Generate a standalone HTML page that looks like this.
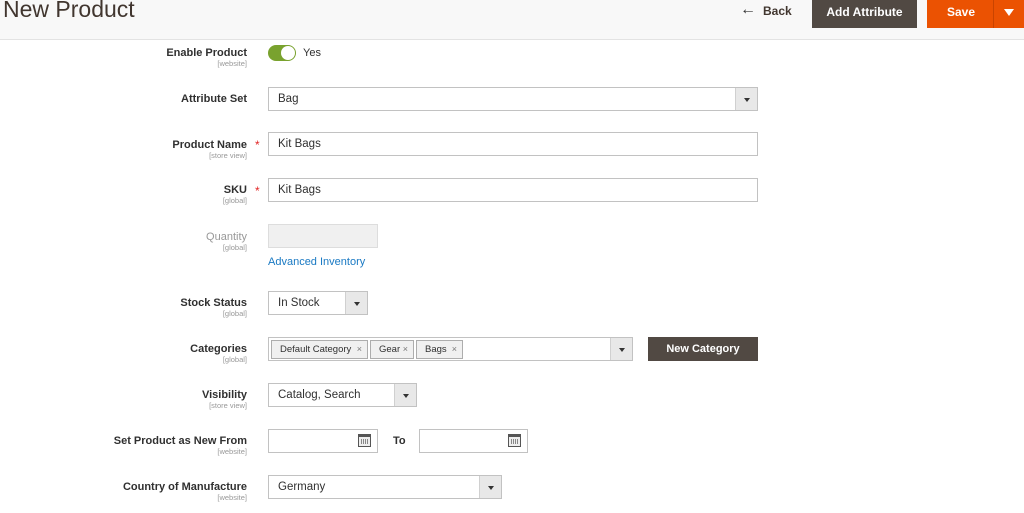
<!DOCTYPE html>
<html><head><style>
*{box-sizing:border-box;margin:0;padding:0}
body{width:1024px;height:513px;background:#fff;font-family:"Liberation Sans",sans-serif;position:relative;overflow:hidden;color:#303030}
.a{position:absolute}
.hdr{left:0;top:0;width:1024px;height:40px;background:#f8f8f8;border-bottom:1px solid #e3e3e3}
.lbl{position:absolute;right:777px;text-align:right;font-size:11px;font-weight:bold;color:#303030;white-space:nowrap}
.lbl small{display:block;font-size:7.5px;font-weight:normal;color:#999;margin-top:0px}
.box{position:absolute;border:1px solid #c2c2c2;background:#fff;height:24px;font-size:11.5px;line-height:22px;padding-left:9px;color:#303030}
.arr{position:absolute;top:0;right:0;width:22px;height:22px;background:#e8e8e8;border-left:1px solid #d0d0d0}
.arr:after{content:"";position:absolute;left:8px;top:10px;border-left:3px solid transparent;border-right:3px solid transparent;border-top:4px solid #333}
.star{position:absolute;left:255px;color:#e22626;font-size:12px}
.tag{position:absolute;top:2px;height:19px;border:1px solid #adadad;background:#f0f0f0;font-size:9.5px;line-height:17px;padding-left:8px;color:#303030}
.tag i{font-style:normal;color:#777;font-size:9px;position:absolute;right:5px}
.cal{position:absolute;right:6px;top:4px;width:13px;height:13px;border:1px solid #555;background:#eee;border-top:3px solid #555}
.cal:after{content:"";position:absolute;left:2px;top:2px;width:7px;height:5px;background:repeating-linear-gradient(90deg,#888 0 1px,transparent 1px 2px)}
</style></head><body>
<div class="a hdr"></div>
<div class="a" style="left:3px;top:-4px;font-size:23px;color:#41362f">New Product</div>
<div class="a" style="left:740px;top:1px;font-size:16px;color:#333">&#8592;</div>
<div class="a" style="left:763px;top:4px;font-size:12px;font-weight:bold;color:#41362f">Back</div>
<div class="a" style="left:812px;top:0;width:105px;height:28px;background:#514943;color:#fff;font-size:12px;font-weight:bold;text-align:center;line-height:24px">Add Attribute</div>
<div class="a" style="left:927px;top:0;width:97px;height:28px;background:#eb5202;color:#fff;font-size:12px;font-weight:bold;line-height:24px"><span style="position:absolute;left:20px">Save</span><span style="position:absolute;left:66px;top:0;width:1px;height:28px;background:#c94400"></span><span style="position:absolute;left:77px;top:9px;border-left:5px solid transparent;border-right:5px solid transparent;border-top:7px solid #fff"></span></div>

<div class="lbl" style="top:47px">Enable Product<small>[website]</small></div>
<div class="a" style="left:268px;top:45px;width:28px;height:16px;border-radius:8px;background:#79a22e"><div class="a" style="right:1px;top:1px;width:14px;height:14px;border-radius:7px;background:#fff"></div></div>
<div class="a" style="left:303px;top:47px;font-size:11px">Yes</div>

<div class="lbl" style="top:93px">Attribute Set</div>
<div class="box" style="left:268px;top:87px;width:490px">Bag<div class="arr"></div></div>

<div class="lbl" style="top:139px">Product Name<small>[store view]</small></div><span class="star" style="top:138px">*</span>
<div class="box" style="left:268px;top:132px;width:490px">Kit Bags</div>

<div class="lbl" style="top:184px">SKU<small>[global]</small></div><span class="star" style="top:184px">*</span>
<div class="box" style="left:268px;top:178px;width:490px">Kit Bags</div>

<div class="lbl" style="top:231px;color:#999;font-weight:normal">Quantity<small>[global]</small></div>
<div class="box" style="left:268px;top:224px;width:110px;background:#f0f0f0;border-color:#ddd"></div>
<div class="a" style="left:268px;top:256px;font-size:11px;color:#1979c3">Advanced Inventory</div>

<div class="lbl" style="top:297px">Stock Status<small>[global]</small></div>
<div class="box" style="left:268px;top:291px;width:100px">In Stock<div class="arr"></div></div>

<div class="lbl" style="top:343px">Categories<small>[global]</small></div>
<div class="box" style="left:268px;top:337px;width:365px">
<div class="tag" style="left:2px;width:97px">Default Category<i>×</i></div>
<div class="tag" style="left:101px;width:44px">Gear<i>×</i></div>
<div class="tag" style="left:147px;width:47px">Bags<i>×</i></div>
<div class="arr"></div></div>
<div class="a" style="left:648px;top:337px;width:110px;height:24px;background:#514943;color:#fff;font-size:11px;font-weight:bold;text-align:center;line-height:24px">New Category</div>

<div class="lbl" style="top:389px">Visibility<small>[store view]</small></div>
<div class="box" style="left:268px;top:383px;width:149px">Catalog, Search<div class="arr"></div></div>

<div class="lbl" style="top:435px">Set Product as New From<small>[website]</small></div>
<div class="box" style="left:268px;top:429px;width:110px"><div class="cal"></div></div>
<div class="a" style="left:393px;top:435px;font-size:11px;font-weight:bold">To</div>
<div class="box" style="left:419px;top:429px;width:109px"><div class="cal"></div></div>

<div class="lbl" style="top:481px">Country of Manufacture<small>[website]</small></div>
<div class="box" style="left:268px;top:475px;width:234px">Germany<div class="arr"></div></div>
</body></html>
